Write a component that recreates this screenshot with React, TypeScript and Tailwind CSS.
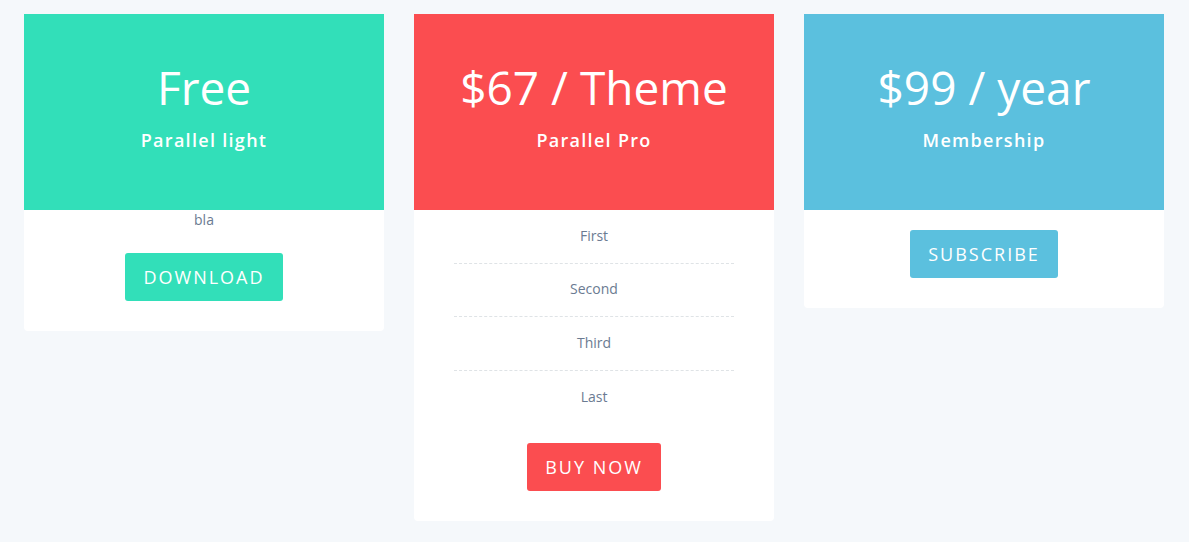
import React from 'react';

const font = { fontFamily: '"Open Sans", "Liberation Sans", sans-serif' };

const Header: React.FC<{ price: string; name: string; color: string }> = ({ price, name, color }) => (
  <div className={`${color} h-[196px] pt-[47px] text-center text-white`}>
    <h2 className="text-[46px] leading-[52px] font-normal">{price}</h2>
    <h3 className="mt-[15px] text-[18px] leading-[24px] font-semibold tracking-[1.3px]">{name}</h3>
  </div>
);

const Button: React.FC<{ label: string; color: string }> = ({ label, color }) => (
  <button className={`${color} h-12 px-[18px] rounded-[3px] text-white text-[18px] tracking-[2px] uppercase`}>
    {label}
  </button>
);

export default function App() {
  const items = ['First', 'Second', 'Third', 'Last'];

  return (
    <div className="min-h-[542px] bg-[#f5f8fb] px-6 pt-[14px]" style={font}>
      <div className="flex items-start gap-[30px]">
        <div className="w-[360px] bg-white rounded-b-[4px] overflow-hidden">
          <Header price="Free" name="Parallel light" color="bg-[#32dfb9]" />
          <div className="flex flex-col items-center pb-[30px]">
            <p className="text-[14px] leading-5 text-[#6b7b92]">bla</p>
            <div className="mt-[23px]">
              <Button label="Download" color="bg-[#32dfb9]" />
            </div>
          </div>
        </div>

        <div className="w-[360px] bg-white rounded-b-[4px] overflow-hidden">
          <Header price="$67 / Theme" name="Parallel Pro" color="bg-[#fb4d50]" />
          <div className="flex flex-col items-center pb-[30px]">
            <ul className="w-[280px]">
              {items.map((item, i) => (
                <li
                  key={item}
                  className={`h-[53.5px] pb-[2px] flex items-center justify-center text-[14px] text-[#6b7b92] ${i < items.length - 1 ? 'border-b border-dashed border-[#dfe3e6]' : ''}`}
                >
                  {item}
                </li>
              ))}
            </ul>
            <div className="mt-[19px]">
              <Button label="Buy Now" color="bg-[#fb4d50]" />
            </div>
          </div>
        </div>

        <div className="w-[360px] bg-white rounded-b-[4px] overflow-hidden">
          <Header price="$99 / year" name="Membership" color="bg-[#5bc0de]" />
          <div className="flex flex-col items-center pt-5 pb-[30px]">
            <Button label="Subscribe" color="bg-[#5bc0de]" />
          </div>
        </div>
      </div>
    </div>
  );
}
